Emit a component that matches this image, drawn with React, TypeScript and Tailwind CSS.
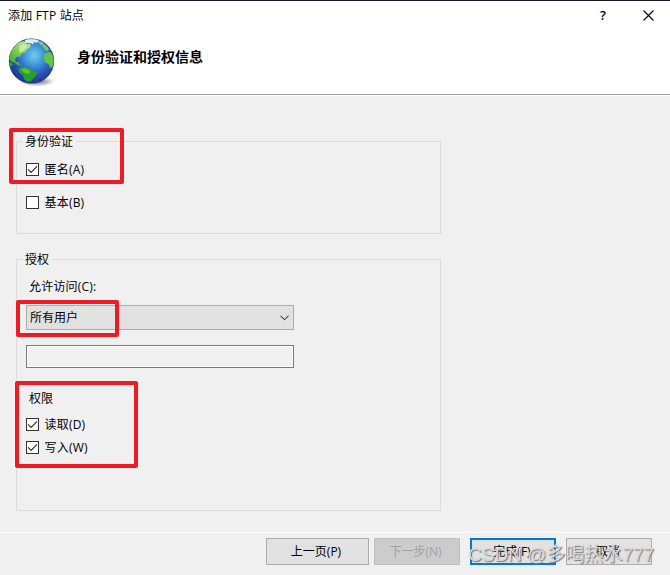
import React, { useState } from "react";

const GlobeIcon = () => (
  <svg width="48" height="50" viewBox="0 0 48 50" className="shrink-0">
    <defs>
      <radialGradient id="ocean" cx="0.56" cy="0.38" r="0.62">
        <stop offset="0" stopColor="#74cdee" />
        <stop offset="0.3" stopColor="#429fdc" />
        <stop offset="0.65" stopColor="#2b59bd" />
        <stop offset="1" stopColor="#22338f" />
      </radialGradient>
      <radialGradient id="shadow">
        <stop offset="0" stopColor="#444" stopOpacity="0.8" />
        <stop offset="1" stopColor="#444" stopOpacity="0" />
      </radialGradient>
      <linearGradient id="land" x1="0.7" y1="0" x2="0.2" y2="1">
        <stop offset="0" stopColor="#c6e496" />
        <stop offset="0.5" stopColor="#72cb4b" />
        <stop offset="1" stopColor="#35a83a" />
      </linearGradient>
      <clipPath id="sphere">
        <circle cx="23.5" cy="23" r="22.6" />
      </clipPath>
    </defs>
    <ellipse cx="29" cy="43.5" rx="18" ry="5" fill="url(#shadow)" />
    <circle cx="23.5" cy="23" r="22.6" fill="url(#ocean)" />
    <g clipPath="url(#sphere)">
      <path
        d="M1 19 Q3 11 8 6 Q13 2 18 4 Q18 7 22 6 Q24 8 20 11 Q18 12 18 14 Q13 15 12 19 Q8 18 7 22 Q8 25 11 24 Q11 27 15 28 Q9 28 6 24 Q5 26 1 21 Z"
        fill="url(#land)"
      />
      <path d="M12 8 Q15 5 17 7 Q21 8 17 11 Q13 15 11 14 Z" fill="#d3e9a0" />
      <path
        d="M1 24 Q4 24 5 27 Q3 29 2 28 Z"
        fill="#2fa23a"
      />
      <path
        d="M11 30 Q14 28 18 29 Q22 29 23 32 Q28 33 30 35 Q28 37 26 40 Q24 43 20 44 Q15 42 15 37 Q9 34 11 30 Z"
        fill="#26a028"
      />
      <path d="M13 31 Q19 29 22 33 Q23 36 19 36 Q15 35 13 31 Z" fill="#55c438" />
      <path
        d="M36 17 Q40 12 43 15 Q46 18 46 26 Q44 30 42 30 Q41 25 38 25 Q35 22 36 17 Z"
        fill="#62c53f"
      />
      <path d="M33 7 Q38 5 41 12 Q38 14 36 10 Z" fill="#7cca6a" />
      <path
        d="M17 2 Q23 -1 31 2 L29 5 L26 4 Q25 8 23 5 Q20 6 17 4 Z"
        fill="#dcefe9"
      />
      <path d="M30 3 Q35 3 36 6 L32 7 Z" fill="#8bc58c" />
    </g>
    <circle
      cx="23.5"
      cy="23"
      r="22.2"
      fill="none"
      stroke="#253e83"
      strokeOpacity="0.35"
    />
  </svg>
);

type CheckItemProps = {
  label: string;
  checked: boolean;
  onChange: (value: boolean) => void;
};

const CheckItem = ({ label, checked, onChange }: CheckItemProps) => (
  <label className="flex h-[15px] items-center gap-[5.5px]">
    <input
      type="checkbox"
      className="sr-only"
      checked={checked}
      onChange={(e) => onChange(e.target.checked)}
    />
    <span className="flex h-[13px] w-[13px] items-center justify-center border border-[#333] bg-white">
      {checked && (
        <svg width="11" height="11" viewBox="0 0 11 11">
          <path
            d="M1.1 5.3 L4.1 8.3 L10 2.4"
            fill="none"
            stroke="#333"
            strokeWidth="1.2"
          />
        </svg>
      )}
    </span>
    <span className="tracking-[0.2px]">{label}</span>
  </label>
);

type GroupProps = {
  title: string;
  className: string;
  children: React.ReactNode;
};

const Group = ({ title, className, children }: GroupProps) => (
  <section
    className={`flex w-[425px] flex-col items-start border border-[#dcdcdc] pl-[9px] ${className}`}
  >
    <h2 className="-mt-2 -ml-[3px] h-[15px] bg-[#f0f0f0] pr-[3px] pl-[2px]">
      {title}
    </h2>
    {children}
  </section>
);

const Highlight = ({ className }: { className: string }) => (
  <div
    className={`pointer-events-none absolute rounded-[2px] border-4 border-[#ed1c24] ${className}`}
  />
);

const App = () => {
  const [anonymous, setAnonymous] = useState(true);
  const [basic, setBasic] = useState(false);
  const [read, setRead] = useState(true);
  const [write, setWrite] = useState(true);

  return (
    <div className="relative flex h-[575px] w-[670px] flex-col overflow-hidden bg-[#f0f0f0] font-['Open_Sans','Noto_Sans_CJK_SC',sans-serif] text-[12px] leading-[15px] text-black">
      <header className="h-[95px] border-t border-b border-t-[#171725] border-b-[#a0a0a0] bg-white">
        <div className="flex h-[29px] items-center pl-2">
          <span className="flex-1 tracking-[0.2px]">添加 FTP 站点</span>
          <span className="w-[43px] text-[13px] font-semibold">?</span>
          <svg width="11" height="11" viewBox="0 0 11 11" className="mr-[16px]">
            <path
              d="M0.5 0.5 L10.5 10.5 M10.5 0.5 L0.5 10.5"
              stroke="#000"
              strokeWidth="1.1"
            />
          </svg>
        </div>
        <div className="flex pt-2 pl-2">
          <GlobeIcon />
          <h1 className="mt-[10px] ml-[21px] text-[14px] leading-[18px] font-bold">
            身份验证和授权信息
          </h1>
        </div>
      </header>

      <main className="h-[437px] border-t border-white pt-[45px] pl-4">
        <Group title="身份验证" className="h-[93px]">
          <div className="mt-[13px] flex flex-col gap-[18px]">
            <CheckItem
              label="匿名(A)"
              checked={anonymous}
              onChange={setAnonymous}
            />
            <CheckItem label="基本(B)" checked={basic} onChange={setBasic} />
          </div>
        </Group>

        <Group title="授权" className="mt-[25px] h-[252px]">
          <div className="mt-[12px] ml-[3px] tracking-[0.2px]">
            允许访问(C):
          </div>
          <button className="mt-[11px] flex h-[25px] w-[268px] items-center justify-between border border-[#adadad] bg-[#e1e1e1] pr-1 pl-[3px]">
            <span>所有用户</span>
            <svg width="9" height="6" viewBox="0 0 9 6">
              <path
                d="M0.5 0.8 L4.5 4.6 L8.5 0.8"
                fill="none"
                stroke="#444"
                strokeWidth="1.1"
              />
            </svg>
          </button>
          <input
            disabled
            className="mt-[15px] h-[23px] w-[268px] border border-[#7a7a7a] bg-[#f0f0f0] inset-ring-1 inset-ring-white"
          />
          <div className="mt-[23px] ml-[3px]">权限</div>
          <div className="mt-[11px] flex flex-col gap-2">
            <CheckItem label="读取(D)" checked={read} onChange={setRead} />
            <CheckItem label="写入(W)" checked={write} onChange={setWrite} />
          </div>
        </Group>
      </main>

      <footer className="flex flex-1 items-start border-t border-white pt-[5px] pl-[266px]">
        <button className="h-[27px] w-[103px] border border-[#adadad] bg-[#e1e1e1] pr-[3px]">
          上一页(P)
        </button>
        <button
          disabled
          className="ml-[5px] h-[27px] w-[86px] border border-[#bfbfbf] bg-[#cccccc] pr-[3px] text-[#a0a0a0]"
        >
          下一步(N)
        </button>
        <button className="ml-[10px] h-[27px] w-[86px] border-2 border-[#0078d7] bg-[#e1e1e1] pr-[2px]">
          完成(F)
        </button>
        <button className="ml-[10px] h-[27px] w-[86px] border border-[#adadad] bg-[#e1e1e1] pr-[2px]">
          取消
        </button>
      </footer>

      <Highlight className="top-[128px] left-[9px] h-[56px] w-[115px]" />
      <Highlight className="top-[300px] left-[16px] h-[37px] w-[103px]" />
      <Highlight className="top-[381px] left-[15px] h-[87px] w-[123px]" />

      <div className="pointer-events-none absolute top-[543px] left-[468px] font-['Liberation_Sans','Noto_Sans_CJK_SC',sans-serif] text-[19px] leading-[24px] whitespace-nowrap text-[#d8d8d8] [text-shadow:1px_1px_1px_#777]">
        CSDN @多喝热水777
      </div>
    </div>
  );
};

export default App;
